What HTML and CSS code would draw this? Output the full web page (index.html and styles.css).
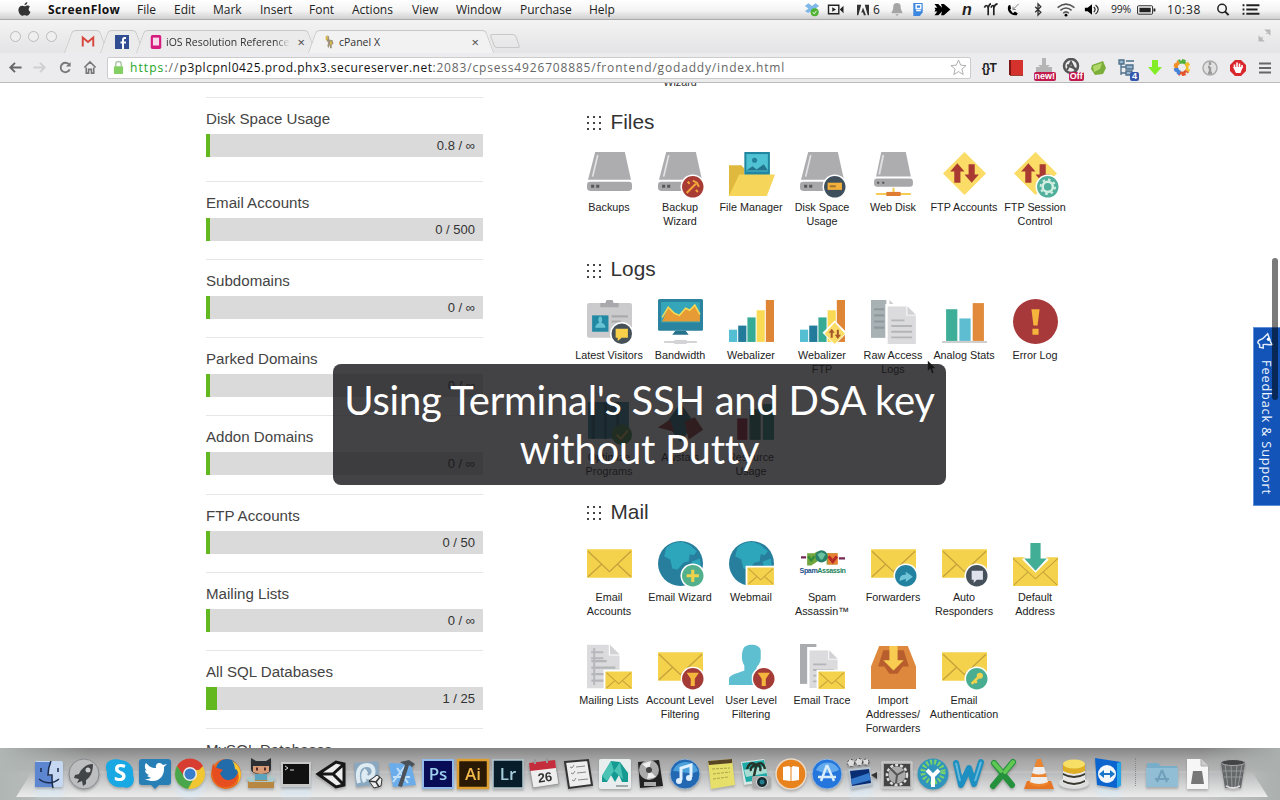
FILE: index.html
```html
<!DOCTYPE html>
<html lang="en">
<head>
<meta charset="utf-8">
<title>cPanel X</title>
<link rel="stylesheet" href="styles.css">
</head>
<body>
<svg class="defs" aria-hidden="true">
  <symbol id="drive" viewBox="0 0 44 44"><path d="M8 1h29l6 27H1L8 1z" fill="#adadb0"/><path d="M10.500 4 5.500 25" stroke="#e4e4e6" stroke-width="1.600"/><rect y="30" width="44" height="9" rx="3" fill="#a8a8ab"/><path d="M4 34.500h3m2 0h3" stroke="#58585b" stroke-width="3"/></symbol>
  <symbol id="mail" viewBox="0 0 44 44"><path d="M0 8h44v28H0z" fill="#f4d24b"/><path d="m1 10 21 20 21-20M1 35l13-12m29 12L30 23" fill="none" stroke="#c4a23b" stroke-width="1.300"/></symbol>
  <symbol id="minimail" viewBox="0 0 28 20"><path d="M0 0h28v20H0z" fill="#fff"/><path d="M2 2h26v17H2z" fill="#f4d24b"/><path d="m3 3 12 11L27 3M3 18l8-7m16 7-8-7" fill="none" stroke="#c4a23b"/></symbol>
  <symbol id="globe" viewBox="0 0 44 44"><circle cx="22" cy="22" r="22" fill="#277f9d"/><path d="M8 7c5-5 9-6 16-6l7 3 7 6-3 4-4-1-1 7-5 1-6 7-5-1-2-9-6-3z" fill="#2da5ba"/><path d="m33 20 8-3 1 9-7 5z" fill="#2da5ba"/></symbol>
  <symbol id="page" viewBox="0 0 30 40"><path d="M0 0h20v10h10v30H0z" fill="#dbdbdd"/><path d="m21 0 9 9h-9z" fill="#d2d2d4"/><path d="M4 15h14M4 21h22M4 27h22M4 33h22" stroke="#b4b5b8" stroke-width="2"/></symbol>
  <symbol id="bars" viewBox="0 0 44 44"><path d="M0 30h8v12H0z" fill="#54bed2"/><path d="M9 26h8v16H9z" fill="#237b9b"/><path d="M18 18h8v24h-8z" fill="#35aa95"/><path d="M27 11h8v31h-8z" fill="#fada55"/><path d="M36 1h8v41h-8z" fill="#df8536"/></symbol>
  <symbol id="updown" viewBox="0 0 44 44"><path d="m22 1 21 21-21 21L1 22z" fill="#fbdc66"/><path d="m15 12 7 8h-4v11h-6V20H8zM26 13h6v10h4l-7 8-7-8h4z" fill="#aa3a31"/></symbol>
  <symbol id="filter" viewBox="0 0 24 24"><circle cx="12" cy="12" r="12" fill="#fff"/><circle cx="12" cy="12" r="10.500" fill="#a43b36"/><path d="M6 6h12l-4 6v7h-4v-7z" fill="#f4b53c"/></symbol>
</svg>

<header class="menubar">
  <nav class="menus">
    <svg class="apple" viewBox="0 0 16 16"><path fill="#333" d="M11 0c0 2-1 3-3 3.500C8 1.700 9 .5 11 0zM8 4.500c1 0 2-1 3.500-.8 1 .1 1.700.5 2.300 1.300-2 1.300-1.700 4.500.6 5.500-.7 2-2 4.200-3.600 4.200-1 0-1.300-.6-2.600-.6s-1.700.6-2.700.6C3.500 14.700 1 10.500 1.600 7.500 2 5 4 3.800 5.500 3.900 6.600 4 7.300 4.500 8 4.500z"/></svg>
    <b>ScreenFlow</b><span>File</span><span>Edit</span><span>Mark</span><span>Insert</span><span>Font</span><span>Actions</span><span>View</span><span>Window</span><span>Purchase</span><span>Help</span>
  </nav>
  <div class="status">
    <svg viewBox="0 0 18 16"><path d="m5 1 4 3 4-3 4 3-4 3 4 3-4 2-4-3-4 3-4-2 4-3-4-3z" fill="#7db8e8"/><circle cx="12" cy="11" r="4.500" fill="#51b332"/><path d="m10 11 1.500 2L14 9.500" stroke="#fff" fill="none"/></svg>
    <svg class="wide" viewBox="0 0 18 16"><path d="M1 3.500h11v9H1z" fill="none" stroke="#222" stroke-width="1.500"/><path d="m5 5.500 4 2.500-4 2.500zM13 8l4-4v8z" fill="#222"/></svg>
    <span class="adobe"><svg viewBox="0 0 14 14"><path d="M0 1h5L1.500 13H0zM9 1h5v12h-1.500zM7 4l3.500 9H8L7 10H5z" fill="#333"/></svg>6</span>
    <svg viewBox="0 0 14 16"><path d="M7 1c4 0 4 3 4 6l2 5H1l2-5c0-3 0-6 4-6zM5 13h4l-2 2z" fill="#a5a5a5"/></svg>
    <svg viewBox="0 0 14 16"><path d="M2 1h10v10l-3 4H2z" fill="#3b86df"/><path d="M5 3h5v4H5zm0 6h5" stroke="#fff" fill="none" stroke-width="1.500"/></svg>
    <svg class="wide" viewBox="0 0 18 16"><path d="M1 2h4l4 4-1-4h3l7 6-7 6H8l1-4-4 4H1l3-4H1l1-2-1-2h3z"/></svg>
    <i class="n">n</i>
    <svg viewBox="0 0 16 16"><path d="M1 6c1-3 3-3 4 0v8M5 6c1-3 2-4 3-4M8 6c1-3 3-3 3 0v8M11 6c1-3 2-4 4-4" fill="none" stroke="#222" stroke-width="1.800"/></svg>
    <svg viewBox="0 0 16 16"><path d="M3 4c-2 5 2 11 9 10l1-2-3-2-2 2-3-4 1-1-1-4z"/><path d="m8 8 6-6M8 5v3h3" stroke="#777" fill="none"/></svg>
    <svg viewBox="0 0 12 16"><path d="m3 5 6 6-3 3V2l3 3-6 6" fill="none" stroke="#333" stroke-width="1.400"/></svg>
    <svg class="wide" viewBox="0 0 20 16"><path d="M1 6c6-5 12-5 18 0M4 9c4-3.500 8-3.500 12 0M7 12c2-2 4-2 6 0" fill="none" stroke="#555" stroke-width="1.700"/><circle cx="10" cy="14" r="1.500"/></svg>
    <svg viewBox="0 0 18 16"><path d="M1 6h3l5-4v12l-5-4H1z"/><path d="M11 5c2 2 2 4 0 6M13 3c4 3 4 7 0 10" fill="none" stroke="#222" stroke-width="1.300"/></svg>
    <small>99%</small>
    <svg class="wide" viewBox="0 0 20 16"><rect x="1" y="4" width="16" height="9" rx="1" fill="none" stroke="#222"/><path d="M3 6h12v5H3zM18 7h2v3h-2z" fill="#222"/></svg>
    <span class="clock">10:38</span>
    <svg viewBox="0 0 16 16"><circle cx="7" cy="7" r="4.500" fill="none" stroke="#222" stroke-width="1.600"/><path d="m10 10 4 4" stroke="#222" stroke-width="2.200"/></svg>
    <svg class="wide" viewBox="0 0 20 16"><path d="M1 3.500h2M5 3.500h14M1 8h2M5 8h12M1 12.500h2M5 12.500h14" stroke="#222" stroke-width="2.200"/></svg>
  </div>
</header>

<div class="tabstrip">
  <div class="lights"><i></i><i></i><i></i></div>
  <div class="tab t1"><svg viewBox="0 0 16 14"><path d="M2 12V2l6 5 6-5v10" fill="none" stroke="#d7453c" stroke-width="2.200"/></svg></div>
  <div class="tab t2"><svg viewBox="0 0 14 14"><path d="M0 0h14v14H0z" fill="#314e92"/><path d="M11 3H9.500Q8 3 8 5v9M5.500 7.500H11" fill="none" stroke="#fff" stroke-width="2"/></svg></div>
  <div class="tab t3"><svg viewBox="0 0 14 16"><rect x="1" width="12" height="16" rx="2" fill="#d61d7f"/><rect x="3.500" y="3" width="7" height="9" fill="#f7dcec"/></svg><span class="fade">iOS Resolution Reference -</span><b>×</b></div>
  <div class="tab active t4"><svg viewBox="0 0 14 16"><path d="m4 0 2 2v3l4 1 1 4-2 1v4H7v-4l-2 4-1-3 1-3-2-3 1-3z" fill="#9b9276"/><path d="M3 1v5m5 1v4" stroke="#dcb944" stroke-width="2"/></svg><span>cPanel X</span><b>×</b></div>
  <div class="newtab"></div>
  <svg class="full" viewBox="0 0 12 12"><path d="M7 1h4v4zM1 7v4h4zM10 2 7.500 4.500M2 10l2.500-2.500" stroke="#b8b8b8" fill="#b8b8b8"/></svg>
</div>

<div class="toolbar">
  <div class="nav">
    <svg viewBox="0 0 16 16"><path d="M8 3 3 8l5 5M3 8h12" fill="none" stroke="#666" stroke-width="2"/></svg>
    <svg viewBox="0 0 16 16"><path d="m8 3 5 5-5 5M13 8H1" fill="none" stroke="#cfcfcf" stroke-width="2"/></svg>
    <svg viewBox="0 0 16 16"><path d="M12 4.500A5 5 0 1 0 13 10" fill="none" stroke="#777" stroke-width="2"/><path d="M14 2v5H9z" fill="#777"/></svg>
    <svg viewBox="0 0 16 16"><path d="m2 8 6-6 6 6M4 8v6h2.500v-4h3v4H12V8" fill="none" stroke="#777" stroke-width="1.700"/></svg>
  </div>
  <div class="urlbar">
    <svg class="lock" viewBox="0 0 12 16"><path d="M3 7V4.500c0-4 6-4 6 0V7" fill="none" stroke="#b2c7a9" stroke-width="1.600"/><rect x="1" y="6.500" width="10" height="8.500" rx="1" fill="#83cf63"/></svg>
    <div class="url"><em>https</em><i>://</i><strong>p3plcpnl0425.prod.phx3.secureserver.net</strong>:2083/cpsess4926708885/frontend/godaddy/index.html</div>
    <svg class="star" viewBox="0 0 18 18"><path d="m9 1 2.300 5.500 5.700.5-4.400 3.700L14 16.500l-5-3.200-5 3.200 1.400-5.800L1 7l5.700-.5z" fill="#fff" stroke="#aaa"/></svg>
  </div>
  <div class="exts">
    <b class="jt">{}T</b>
    <svg viewBox="0 0 20 20"><path d="M3 2h14v15H3z" fill="#d5322e"/><path d="M3 2h2v15H3z" fill="#7f1717"/><path d="M4 17.500h13" stroke="#943"/></svg>
    <div class="badged"><svg viewBox="0 0 20 20"><path d="M8 0h4v7h4l-6 5-6-5h4zM2 9h16v5H2z" fill="#b5b5b5"/></svg><b class="new">new!</b></div>
    <div class="badged"><svg viewBox="0 0 20 20"><circle cx="9" cy="8" r="7" fill="none" stroke="#555" stroke-width="2.500"/><path d="m5 12 4-8 4 8M5 7l9 4" stroke="#555" fill="none" stroke-width="2"/></svg><b class="off">Off</b></div>
    <svg viewBox="0 0 20 20"><path d="m3 7 11-4 3 7-3 6-8 1-4-6z" fill="#7cae3b"/><path d="m4 8 9-3-2 6-6 3z" fill="#b2d86a"/></svg>
    <div class="badged"><svg viewBox="0 0 20 20"><path d="M2 2h5v4H2zM4 6v11M4 9h5M4 15h5M9 3h8M9 7h7v4H9zM9 13h6v4H9z" fill="#9ab6ce" stroke="#4b6d89" stroke-width="1.300"/></svg><b class="four">4</b></div>
    <svg viewBox="0 0 20 20"><path d="M7 2h6v7h4l-7 8-7-8h4z" fill="#83ed27"/></svg>
    <svg viewBox="0 0 20 20"><g fill="none" stroke-width="4.500"><path d="M4 11a6 6 0 0 1 3-7" stroke="#f28f24"/><path d="M7 4a6 6 0 0 1 7 1" stroke="#54af3e"/><path d="M14 5a6 6 0 0 1 1 8" stroke="#f1bc23"/><path d="M15 13a6 6 0 0 1-8 2" stroke="#e4552e"/><path d="M8 15a6 6 0 0 1-4-5" stroke="#4383dc"/></g><circle cx="9.500" cy="9.500" r="8" fill="none" stroke="#ececee" stroke-width="2" stroke-dasharray="2 4"/></svg>
    <svg viewBox="0 0 20 20"><circle cx="10" cy="10" r="7" fill="#e1e1e1" stroke="#aaa" stroke-width="1.500"/><path d="M10 4v3m0 2v6m-2 0h4M8 9h2" stroke="#9a9a9a" stroke-width="2.400"/></svg>
    <svg viewBox="0 0 20 20"><path d="M7 2h6l5 5v6l-5 5H7l-5-5V7z" fill="#d9272d"/><path d="M6.500 10V6.500M9 10V4.500M11.500 10V5.500M14 10V7" stroke="#fff" stroke-width="1.600"/><path d="m5 9 3 6h4.500l2.300-6z" fill="#fff"/></svg>
    <svg viewBox="0 0 20 20"><path d="M4 5.500h12M4 10h12M4 14.500h12" stroke="#666" stroke-width="2"/></svg>
  </div>
</div>

<main class="page">
  <aside class="stats">
    <div class="stat first"><h3>Disk Space Usage</h3><div class="meter">0.8 / ∞</div></div>
    <div class="stat"><h3>Email Accounts</h3><div class="meter">0 / 500</div></div>
    <div class="stat"><h3>Subdomains</h3><div class="meter">0 / ∞</div></div>
    <div class="stat"><h3>Parked Domains</h3><div class="meter">0 / ∞</div></div>
    <div class="stat"><h3>Addon Domains</h3><div class="meter">0 / ∞</div></div>
    <div class="stat"><h3>FTP Accounts</h3><div class="meter">0 / 50</div></div>
    <div class="stat"><h3>Mailing Lists</h3><div class="meter">0 / ∞</div></div>
    <div class="stat"><h3>All SQL Databases</h3><div class="meter used">1 / 25</div></div>
    <div class="stat"><h3>MySQL Databases</h3></div>
  </aside>
  <div class="groups">
    <div class="prev"><span>Wizard</span></div>
    <section class="files">
      <h2><i class="grip"></i>Files</h2>
      <div class="grid">
        <a><svg><use href="#drive"/></svg>Backups</a>
        <a><svg viewBox="0 0 44 44"><use href="#drive"/><circle cx="34" cy="35" r="12" fill="#fff"/><circle cx="34" cy="35" r="10.500" fill="#a83b34"/><path d="m28 41 9-9M34 29l4 2 2 4M31 32l-2-2M37 38l2 2" fill="none" stroke="#f2a53a" stroke-width="2"/></svg>Backup<br>Wizard</a>
        <a><svg viewBox="0 0 44 44"><path d="M0 14h12l3 3v27H0z" fill="#dfb93d"/><path d="M15 1h25v25H15z" fill="#2187a1"/><path d="M17 3h21v17H17z" fill="#4fc3d3"/><path d="m17 19 6-4 4 3 7-5 4 6z" fill="#24748e"/><circle cx="25" cy="9" r="2.500" fill="#23819b"/><path d="M10 23h35l-8 21H0z" fill="#f6d65a"/></svg>File Manager</a>
        <a><svg viewBox="0 0 44 44"><use href="#drive"/><circle cx="34" cy="35" r="12" fill="#fff"/><circle cx="34" cy="35" r="10.500" fill="#3f505c"/><path d="M27 31h14v7H27z" fill="#f3b13b"/><path d="M29 34.500h6" stroke="#a37330" stroke-width="2"/></svg>Disk Space<br>Usage</a>
        <a><svg viewBox="0 0 44 44"><path d="M10 1h24l5 24H5z" fill="#adadb0"/><path d="m12 4-4 19" stroke="#dedee0" stroke-width="2"/><rect x="3" y="27" width="38" height="8" rx="3" fill="#a8a8ab"/><path d="M6 31h2m3 0h2" stroke="#555" stroke-width="2"/><path d="M5 42h34M22 36v6" stroke="#f4cc54" stroke-width="2"/><path d="M15 40h14v4H15z" fill="#df7e32"/></svg>Web Disk</a>
        <a><svg><use href="#updown"/></svg>FTP Accounts</a>
        <a><svg viewBox="0 0 44 44"><use href="#updown"/><circle cx="34" cy="35" r="12" fill="#fff"/><circle cx="34" cy="35" r="10.500" fill="#50b09b"/><circle cx="34" cy="35" r="5" fill="none" stroke="#d3eee2" stroke-width="2.500"/><circle cx="34" cy="35" r="7" fill="none" stroke="#d3eee2" stroke-width="2" stroke-dasharray="2.500 3"/></svg>FTP Session<br>Control</a>
      </div>
    </section>
    <section class="logs">
      <h2><i class="grip"></i>Logs</h2>
      <div class="grid">
        <a><svg viewBox="0 0 44 44"><rect y="4" width="44" height="34" rx="2" fill="#cbcbcd"/><path d="M13 4h5l1-3h6l1 3h5v4H13z" fill="#a9a9ad"/><path d="M5 16h16v16H5z" fill="#2388a3"/><path d="M8 28c1-4 3-4 4-5-2-4 0-6 1-6s3 2 1 6c1 1 4 1 4 5z" fill="#67c3d3"/><path d="M24 17h16M24 22h9" stroke="#aaa" stroke-width="2"/><circle cx="34" cy="34" r="11.500" fill="#fff"/><circle cx="34" cy="34" r="10" fill="#455059"/><path d="M28 29h12v9h-6l-4 3v-3h-2z" fill="#f8cf48"/></svg>Latest Visitors</a>
        <a><svg viewBox="0 0 44 44"><rect width="44" height="31" rx="1.500" fill="#2b849f"/><path d="M3 3h38v20H3z" fill="#35a5b9"/><path d="m4 22 6-14 6 6 5 2 6-7 4 2 5-5 5 9v7z" fill="#e79b35"/><path d="m4 18 6-10 6 6 5 2 6-7 4 2 5-5 5 9" fill="none" stroke="#f8d954" stroke-width="1.500"/><path d="M17 31h10l3 4H14z" fill="#24718c"/><path d="M6 42h32" stroke="#aaa"/><path d="M16 40h12v4H16z" fill="#d4d4d6"/></svg>Bandwidth</a>
        <a><svg><use href="#bars"/></svg>Webalizer</a>
        <a><svg viewBox="0 0 44 44"><use href="#bars"/><path d="m34 21 12 12-12 12-12-12z" fill="#fff"/><path d="m34 23 10 11-10 10-10-10z" fill="#fbdc66"/><path d="m31 29 3 4h-2v5h-2v-5h-2zM37 39l-3-4h2v-5h2v5h2z" fill="#a65729"/></svg>Webalizer<br>FTP</a>
        <a><svg viewBox="0 0 44 44"><path d="M0 1h15v37H0z" fill="#a8b1b4"/><path d="M3 10h10M3 16h10M3 22h10M3 28h10" stroke="#8f999d" stroke-width="2"/><path d="m18 1 4 4h-4z" fill="#ccc"/><path d="M14 5h32v40H14z" fill="#fff"/><use href="#page" x="16" y="7" width="28" height="37"/></svg>Raw Access<br>Logs</a>
        <a><svg viewBox="0 0 44 44"><path d="M4 10h11v31H4z" fill="#3fae99"/><path d="M17 19h11v22H17z" fill="#5ebdd0"/><path d="M30 4h11v37H30z" fill="#e28a3b"/><path d="M0 42h44" stroke="#cfcfcf" stroke-width="2"/></svg>Analog Stats</a>
        <a><svg viewBox="0 0 44 44"><circle cx="22" cy="22" r="22" fill="#a7393a"/><path d="M18 10h8l-2 16h-4zM19 29h6v6h-6z" fill="#f5b43c"/></svg>Error Log</a>
        <a><svg viewBox="0 0 44 44"><path d="M1 1h40v36H1z" fill="#2d8ca0"/><path d="M6 1v36M18 1v36M30 1v36" stroke="#1a657b" stroke-width="3"/><circle cx="34" cy="33" r="10" fill="#3b8d49"/><path d="m29 33 4 4 7-8" fill="none" stroke="#e9b64d" stroke-width="2"/></svg>Optimize<br>Programs</a>
        <a><svg viewBox="0 0 44 44"><path d="m22 2 14 20-14 18L8 22z" fill="#256f87"/><path d="m0 26 12-8 4 12zM26 20l10-4 8 12-14 10z" fill="#8f3636"/></svg>Awstats</a>
        <a><svg viewBox="0 0 44 44"><path d="M8 17h10v21H8z" fill="#a31e36"/><path d="M20 8h11v30H20z" fill="#267b65"/><path d="M33 3h11v35H33z" fill="#288c86"/></svg>Resource<br>Usage</a>
      </div>
    </section>
    <section class="mail">
      <h2><i class="grip"></i>Mail</h2>
      <div class="grid">
        <a><svg><use href="#mail"/></svg>Email<br>Accounts</a>
        <a><svg viewBox="0 0 44 44"><use href="#globe"/><circle cx="34" cy="34" r="12" fill="#fff"/><circle cx="34" cy="34" r="10.500" fill="#52b18c"/><path d="M28 34h12M34 28v12" stroke="#f0d34c" stroke-width="3"/></svg>Email Wizard</a>
        <a><svg viewBox="0 0 44 44"><use href="#globe"/><use href="#minimail" x="16" y="24" width="28" height="20"/></svg>Webmail</a>
        <a><svg viewBox="0 0 44 44"><path d="M7 12h7l3-2v10l-6 4H7zM26 12h10v11H26z" fill="#71a63e"/><path d="M27 12h10v11H27z" fill="#e67f31"/><path d="M1 16h5M38 17h6" stroke="#752653" stroke-width="2"/><circle cx="21" cy="15" r="6" fill="#28826b"/><path d="m17 13 4-2 4 2-3 5h-2z" fill="#6cc1a1"/><path d="m28 15 4 5 4-5" fill="none" stroke="#b62b25" stroke-width="3"/><path d="m8 15 3 4 3-4" fill="none" stroke="#2d8b3a" stroke-width="2"/><text x="22" y="31" class="spam"><tspan fill="#23518a">Spam</tspan><tspan fill="#24835a">Assassin</tspan></text></svg>Spam<br>Assassin™</a>
        <a><svg viewBox="0 0 44 44"><use href="#mail"/><circle cx="34" cy="34" r="12" fill="#fff"/><circle cx="34" cy="34" r="10.500" fill="#2482a1"/><path d="M28 39c0-5 2-6 6-6v-3l7 5-7 5v-3z" fill="#70c5da"/></svg>Forwarders</a>
        <a><svg viewBox="0 0 44 44"><use href="#mail"/><circle cx="34" cy="34" r="12" fill="#fff"/><circle cx="34" cy="34" r="10.500" fill="#46515c"/><path d="M29 29h11v9h-6l-3 3v-3h-2z" fill="#dfe2ed"/></svg>Auto<br>Responders</a>
        <a><svg viewBox="0 0 44 44"><path d="M0 16h44v28H0z" fill="#f4d24b"/><path d="m0 17 22 20 22-20M1 43l14-13m28 13L29 30" fill="none" stroke="#c4a23b"/><path d="M15 13h14l6 5-13 13L9 18z" fill="#fff"/><path d="M17 2h10v15h6L22 29 11 17h6z" fill="#42ae96"/></svg>Default<br>Address</a>
        <a><svg viewBox="0 0 44 44"><use href="#page" width="32" height="44"/><path d="M7 4v36M4 8h12M4 14h12" stroke="#b7b7bd" stroke-width="2"/><use href="#minimail" x="16" y="25" width="28" height="20"/></svg>Mailing Lists</a>
        <a><svg viewBox="0 0 44 44"><use href="#mail"/><use href="#filter" x="22" y="22" width="24" height="24"/></svg>Account Level<br>Filtering</a>
        <a><svg viewBox="0 0 44 44"><path d="M14 5c1-6 16-6 17 1v8c0 5-3 7-4 9v5l9 6v6H0v-6c0-4 11-6 15-8v-5c-3-4-3-12-1-16z" fill="#5dbfd0"/><use href="#filter" x="22" y="22" width="24" height="24"/></svg>User Level<br>Filtering</a>
        <a><svg viewBox="0 0 44 44"><path d="M0 0h16v39H0z" fill="#aaabae"/><path d="M7 3h30v39H7z" fill="#fff"/><use href="#page" x="9" y="6" width="28" height="37"/><use href="#minimail" x="16" y="25" width="28" height="20"/></svg>Email Trace</a>
        <a><svg viewBox="0 0 44 44"><path d="M8 2h28l8 20v22H0V22z" fill="#dd883c"/><path d="M12 6h20l5 16h-6l-5 7h-8l-5-7H7z" fill="#b85d2d"/><path d="M18 2h8v14h6L22 26 12 16h6z" fill="#f7cc50"/></svg>Import<br>Addresses/<br>Forwarders</a>
        <a><svg viewBox="0 0 44 44"><use href="#mail"/><circle cx="34" cy="34" r="12" fill="#fff"/><circle cx="34" cy="34" r="10.500" fill="#49ae91"/><circle cx="37" cy="31" r="3" fill="#f3d34c"/><path d="m35 33-6 6m3-3 2 2" stroke="#f3d34c" stroke-width="2.500"/></svg>Email<br>Authentication</a>
      </div>
    </section>
  </div>
  <div class="feedback"><svg viewBox="0 0 20 20"><path d="M2 12c0-4 4-3 6-5l5-5c2 4 2 9 5 12-4 1-7-1-10 0v4l-4-1v-3z" fill="none" stroke="#e6eefb" stroke-width="1.600"/><circle cx="14" cy="8" r="2" fill="#fff"/></svg><span>Feedback &amp; Support</span></div>
  <div class="thumb"></div>
  <div class="caption">Using Terminal's SSH and DSA key<br><span>without Putty</span></div>
  <svg class="cursor" viewBox="0 0 12 16"><path d="M1 0v12l3-3 2 6 2-1-2-5h4z" fill="#161616"/></svg>
</main>

<footer class="desktop">
  <div class="shelf"></div>
  <div class="dock">
    <svg class="run" viewBox="0 0 32 32"><rect x="2" y="3" width="28" height="26" rx="2" fill="#c6d8f1"/><path d="M2 4h16c-3 7-3 10-3 14h4v11H2z" fill="#5d86d1"/><path d="M18 3c-3 7-3 10-3 14h4c0 6 0 9 1 13M8 10v4m17-4v4M6 21c6 5 14 5 20 0" fill="none" stroke="#1b2b4c" stroke-width="1.500"/></svg>
    <svg viewBox="0 0 32 32"><circle cx="16" cy="16" r="15" fill="#bcbec0" stroke="#878a8d"/><path d="M25 6c-7 0-12 5-14 10l-4 1-1 3 5 1-2 4 5-2 1 5 3-2v-4c5-3 7-9 7-16z" fill="#424548"/><circle cx="20" cy="12" r="2.500" fill="#ccc"/></svg>
    <svg viewBox="0 0 32 32"><path d="M5 3c7-3 9-1 12-1 9 1 13 8 12 15 3 7-2 15-10 12C9 31 2 23 3 14 1 9 2 5 5 3z" fill="#18a8e4"/><text x="16" y="23" class="logo" fill="#fff">S</text></svg>
    <svg viewBox="0 0 32 32"><path d="M3 1h26q3 0 3 3v20q0 3-3 3h-9l-4 4-4-4H3q-3 0-3-3V4q0-3 3-3z" fill="#287fb6"/><path d="M6 21c12 6 20-2 19-12l3-3-4 1c-4-4-8-1-7 3-5 0-7-2-10-5-2 3-1 6 1 8l-2-1c0 3 2 4 4 5l-2 1 4 2c-2 1-4 1-6 1z" fill="#fff"/></svg>
    <svg class="run" viewBox="0 0 32 32"><circle cx="16" cy="16" r="15" fill="#f0c633"/><path d="M3 8a15 15 0 0 1 26 0l-4 4H16L9 21z" fill="#d73e31"/><path d="M3 8c-5 10 0 21 11 23l6-11-8 1z" fill="#49a64a"/><circle cx="16" cy="16" r="7" fill="#eee"/><circle cx="16" cy="16" r="5.500" fill="#387ecb"/></svg>
    <svg viewBox="0 0 32 32"><circle cx="16" cy="16" r="15" fill="#e96a1e"/><circle cx="17" cy="12" r="11" fill="#236cac"/><path d="M3 5c2 7 5 4 10 7l-3 3c3 9 11 9 18 2-2 9-7 12-13 12C5 29 0 18 3 5z" fill="#e64d1f"/><path d="M22 3c9 4 12 16 5 23 3-6 2-12-1-15-2 2 0-4-4-8z" fill="#f9c72d"/></svg>
    <svg viewBox="0 0 32 32"><path d="M6 0l5 3h10l5-3v11c0 7-20 7-20 0z" fill="#2d3032"/><path d="M8 8h16v6q-8 4-16 0z" fill="#d89b77"/><path d="M11 11h2m6 0h2" stroke="#542b25" stroke-width="3"/><path d="M10 16h12v8H10z" fill="#5ca3bd"/><path d="M3 22h26v8H3z" fill="#b88843"/><path d="m1 20 6-2 3 5h12l3-5 6 2-3 4H4z" fill="#a9c9cc"/></svg>
    <svg class="run" viewBox="0 0 32 32"><path d="M1 4h30v25H1z" fill="#c7c7c7"/><path d="M3 6h26v20H3z" fill="#111"/><path d="m5 8 3 2-3 2m5 0h4" fill="none" stroke="#ddd"/></svg>
    <svg viewBox="0 0 32 32"><path d="M1 16 20 3l9 2v22l-9 3z" fill="#eee"/><path d="m2 16 18-12 8 2v21l-8 2zM2 16h15M17 16l11-10M17 16l11 11" fill="none" stroke="#171717" stroke-width="3"/></svg>
    <svg viewBox="0 0 32 32"><path d="M3 5 27 3l2 23-24 3z" fill="#8aa8bf"/><path d="M8 25c-3-11 0-18 8-18 7 0 9 9 3 12-5 2-6-4-3-6M14 24c-3-5-2-9 1-12" fill="none" stroke="#deebf3" stroke-width="4"/><path d="m18 23 8-6 5 4-1 7-7 2z" fill="#eee" stroke="#333"/><path d="m18 23 7 1 4-5m-4 5 3 5" fill="none" stroke="#333" stroke-width="1.500"/></svg>
    <svg viewBox="0 0 32 32"><path d="m3 5 22 1 5 21-23 2z" fill="#6badea"/><path d="m7 24 12-16M11 10l11 15M7 19h17" stroke="#c3e0fa" stroke-width="2"/><path d="m14 4 9-2 6 4-3 3-3-2-7 22-4-1 7-21z" fill="#4a5158"/></svg>
    <svg viewBox="0 0 32 32"><path d="M1 2h30v28H1z" fill="#080c57" stroke="#91b9ea" stroke-width="2"/><text x="16" y="22" class="app" fill="#9dceed">Ps</text></svg>
    <svg viewBox="0 0 32 32"><path d="M1 2h30v28H1z" fill="#2a1905" stroke="#dc9d31" stroke-width="2.500"/><text x="16" y="22" class="app" fill="#f1b64b">Ai</text></svg>
    <svg viewBox="0 0 32 32"><path d="M1 2h30v28H1z" fill="#071e2a" stroke="#b5c8d0" stroke-width="1.500"/><text x="16" y="22" class="app" fill="#a5cddb">Lr</text></svg>
    <svg viewBox="0 0 32 32"><path d="m1 6 26-4 4 24-26 4z" fill="#eee" stroke="#999"/><path d="m1 5 26-3 1 8-26 3z" fill="#c52c3c"/><path d="M7 1v5M19 0v5" stroke="#999" stroke-width="2"/><text x="17" y="24" class="date" transform="rotate(-8 16 20)">26</text></svg>
    <svg viewBox="0 0 32 32"><path d="m2 4 23-2 4 25-23 3z" fill="#eee" stroke="#333" stroke-width="2"/><path d="m7 9 2 1 2-3m-3 8 2 1 2-3m-3 9 2 1 2-3M13 9l9-1m-8 7 9-1m-8 8 10-1" fill="none" stroke="#888"/></svg>
    <svg viewBox="0 0 32 32"><rect y="1" width="32" height="30" rx="2" fill="#e8eded"/><path d="m3 18 9-15 9 1 8 11v9h-6l-3-7-4 7-4-7-4 7H3z" fill="#159a92"/><path d="m3 18 9-15 3 10-7 10zM15 13l6-9 3 17z" fill="#4ac2b4"/><path d="M17 28h12" stroke="#566"/></svg>
    <svg viewBox="0 0 32 32"><path d="m4 4 21-2 4 26-23 2z" fill="#222"/><circle cx="15" cy="12" r="10" fill="#aaa"/><path d="m15 12-7-6 9-3zM15 12l7 7-9 2z" fill="#eee"/><circle cx="15" cy="12" r="3" fill="#444"/><path d="M10 24h12v4H10z" fill="#aaa"/></svg>
    <svg viewBox="0 0 32 32"><circle cx="16" cy="16" r="15" fill="#2368b2" stroke="#9ab3ca"/><path d="M4 13C8 1 26 1 29 13c-8 5-17 0-25 0z" fill="#4ba0db"/><path d="M12 22V10l10-3v12" fill="none" stroke="#e0f0ff" stroke-width="3"/><circle cx="10" cy="23" r="3" fill="#e0f0ff"/><circle cx="20" cy="20" r="3" fill="#e0f0ff"/></svg>
    <svg viewBox="0 0 32 32"><path d="m3 3 24-2 3 26-24 4z" fill="#e6df6a"/><path d="m3 3 24-2v4L4 7z" fill="#594526"/><path d="m7 11 18-1m-17 6 17-2m-17 7 15-2" stroke="#aaa64a" stroke-dasharray="3 1"/></svg>
    <svg viewBox="0 0 32 32"><path d="m1 4 23-3 5 22-25 4z" fill="#d8e8e6"/><path d="m2 5 22-3 4 19-22 3z" fill="#1faaa7"/><path d="m4 12 22-4 1 7-21 4z" fill="#a9dcd2"/><path d="M14 23c-1-7 2-11 2-15M16 7c-5-4-8 0-9 4m9-4c-4 0-6 4-5 6m5-6c6-4 8 0 9 4m-9-4c5 0 5 4 4 6" fill="none" stroke="#253329" stroke-width="2.500"/><rect x="12" y="18" width="19" height="12" rx="2" fill="#aaa"/><circle cx="22" cy="24" r="5.500" fill="#15292d" stroke="#ddd"/><circle cx="22" cy="24" r="2.500" fill="#247d8d"/></svg>
    <svg viewBox="0 0 32 32"><circle cx="16" cy="16" r="15" fill="#e8821d" stroke="#eadac8" stroke-width="1.500"/><path d="m8 9 6-1 2 2 2-2 6 1v13l-7 1h-2l-7-1z" fill="#fff"/><path d="M16 10v13" stroke="#e8821d"/></svg>
    <svg viewBox="0 0 32 32"><circle cx="16" cy="16" r="15" fill="#2475dc" stroke="#9cb9d7"/><path d="M5 12C9 2 24 2 28 12c-8 4-16 4-23 0z" fill="#62a9ee"/><path d="m16 7-6 16m6-16 7 16M7 19h18" stroke="#d9edfb" stroke-width="2.500"/></svg>
    <svg class="run" viewBox="0 0 32 32"><path d="m2 11 22-2 3 18-22 4z" fill="#b8c4d0"/><path d="m4 13 19-2 2 14-19 3z" fill="#092d73"/><path d="m5 21 18-6 2 7-19 5z" fill="#3478cb"/><g fill="#ddd" stroke="#444" stroke-dasharray="2 2"><circle cx="5" cy="5" r="3.500"/><circle cx="13" cy="4" r="3.500"/><circle cx="20" cy="4" r="3"/></g><path d="m25 17 6-3v7z" fill="#333"/></svg>
    <svg viewBox="0 0 32 32"><path d="M1 4h30v26H1z" fill="#aaa" stroke="#ddd"/><path d="M3 6h26v22H3z" fill="#444"/><circle cx="16" cy="17" r="8.500" fill="#aaa"/><circle cx="16" cy="17" r="10" fill="none" stroke="#ddd" stroke-width="2.500" stroke-dasharray="3 2"/><path d="m16 17-6-6m6 6 7-4m-7 4-1 8" stroke="#555" stroke-width="2"/></svg>
    <svg viewBox="0 0 32 32"><circle cx="16" cy="16" r="15.500" fill="#3095bd"/><circle cx="16" cy="14" r="10" fill="none" stroke="#7bd369" stroke-width="5" stroke-dasharray="2 2"/><path d="M16 29V18l-6-6m6 6 6-6" fill="none" stroke="#fff" stroke-width="4"/></svg>
    <svg viewBox="0 0 32 32"><path d="M4 5 9 27 17 10l5 16 7-22" fill="none" stroke="#1d8fc0" stroke-width="6" stroke-linejoin="round" stroke-linecap="round"/><path d="m4 5 4 18m21-19-6 19" stroke="#67b9dc" stroke-width="2"/></svg>
    <svg viewBox="0 0 32 32"><path d="M7 5 25 27M26 4 6 28" stroke="#25913d" stroke-width="6" stroke-linecap="round"/><path d="m7 5 7 8m12-9-8 10" stroke="#61c854" stroke-width="4" stroke-linecap="round"/></svg>
    <svg viewBox="0 0 32 32"><path d="m4 23 24 0 3 8H1z" fill="#e87523"/><path d="m14 1h4l8 25q-10 5-20 0z" fill="#ed842f"/><path d="m11 9 10 0 2 6q-7 3-14 0zM8 19h16l1 5q-9 4-18 0z" fill="#eee"/></svg>
    <svg viewBox="0 0 32 32"><ellipse cx="16" cy="25" rx="15" ry="6" fill="#ddd"/><path d="M5 5v20q11 7 22 0V5z" fill="#e8e8e8"/><path d="M5 15q11 6 22 0v2q-11 6-22 0zM5 22q11 6 22 0v2q-11 6-22 0z" fill="#3a3930"/><path d="M5 13q11 6 22 0V5H5z" fill="#dfae26"/><ellipse cx="16" cy="6" rx="11" ry="4.500" fill="#f7de65"/></svg>
    <svg class="run" viewBox="0 0 32 32"><path d="m2 0 26 4v23l-5 3L4 27z" fill="#0c65ce"/><path d="m28 4-4 1v25l4-3z" fill="#28a6e7"/><circle cx="14" cy="16" r="9" fill="#f4f8fb"/><path d="m6 16 5-4v3h6v-3l5 4-5 4v-3h-6v3z" fill="#1975c8"/></svg>
    <i class="sep"></i>
    <svg viewBox="0 0 32 32"><path d="M1 5h11l3 3h16v20H1z" fill="#79aecb"/><path d="M0 10h32v19H0z" fill="#91bdd5"/><path d="m16 12-5 12m5-12 5 12M9 21h14" stroke="#6f9fbb" stroke-width="2"/></svg>
    <svg viewBox="0 0 32 32"><path d="M6 1h14l7 7v23H6z" fill="#f6f6f6"/><path d="M20 1v7h7" fill="#ccc" stroke="#aaa"/><path d="M12 13h9l2 13H10z" fill="#777"/></svg>
    <svg viewBox="0 0 32 32"><path d="m4 5 4 25h16l4-25z" fill="#65686a"/><path d="m8 6 3 23M14 7l1 22M20 7l-2 22M25 6l-4 23M6 13h21M7 19h18" stroke="#969898"/><ellipse cx="16" cy="4.500" rx="12" ry="3" fill="#424446" stroke="#aaa"/><path d="M9 28q7 4 14 0" fill="none" stroke="#ddd" stroke-width="2"/></svg>
  </div>
</footer>
</body>
</html>
```
FILE: styles.css
```css
* { box-sizing: border-box; }
body { margin: 0; width: 1280px; height: 800px; overflow: hidden; display: flex; flex-direction: column; font-family: "Liberation Sans", Arial, sans-serif; background: #fff; }
.defs { position: absolute; width: 0; height: 0; }

.menubar { height: 20px; flex: none; display: flex; justify-content: space-between; background: linear-gradient(#fff, #f4f4f4 55%, #d0d0d0); border-bottom: 1px solid #aaa; font: 500 12px/19px "Open Sans", sans-serif; color: #222; }
.menus { display: grid; grid-template-columns: 31px 89px 37px 39px 47px 49px 43px 60px 44px 64px 69px 60px; padding-left: 17px; white-space: nowrap; }
.apple { width: 15px; height: 17px; margin-top: 1px; }
.menus b { color: #111; letter-spacing: .4px; }
.status { display: grid; grid-template-columns: 19px 30px 34px 24px 18px 30px 20px 28px 16px 34px 22px 30px 28px 22px 54px 24px 32px; padding-right: 13px; align-items: center; justify-items: center; }
.status svg { height: 15px; width: 16px; }
.status .wide { width: 20px; }
.status .adobe { display: flex; gap: 3px; align-items: center; }
.status .adobe svg { width: 14px; height: 12px; }
.status small { font-size: 10.500px; letter-spacing: -.2px; }
.clock { letter-spacing: .7px; }
.n { font: italic 900 16px "Liberation Sans", sans-serif; }

.tabstrip { height: 33px; flex: none; display: flex; align-items: flex-end; background: linear-gradient(#f3f3f3, #e4e4e6); position: relative; }
.lights { width: 68px; align-self: center; display: flex; gap: 7px; padding-left: 10px; }
.lights i { width: 11px; height: 11px; border: 1px solid #bbb; border-radius: 50%; background: #efefef; }
.tab { height: 23px; flex: none; position: relative; display: flex; align-items: center; font: 500 10.500px "Open Sans", sans-serif; color: #333; z-index: 0; }
.tab::before, .tab::after { content: ""; position: absolute; z-index: -1; top: 0; bottom: 0; background: #ebebec; border-top: 1px solid #c8c8c8; }
.tab::before { left: 0; right: calc(50% - 6px); border-left: 1px solid #c8c8c8; transform: skewX(-20deg); border-top-left-radius: 4px; }
.tab::after { right: 0; left: calc(50% - 6px); border-right: 1px solid #c8c8c8; transform: skewX(20deg); border-top-right-radius: 4px; }
.active::before, .active::after { background: #f2f2f2; }
.tab svg { width: 14px; height: 14px; }
.tab b { margin-left: auto; font-size: 13px; font-weight: 400; color: #444; }
.t1 { width: 36px; justify-content: center; }
.t1 svg { margin-left: 3px; }
.t2 { width: 36px; justify-content: center; }
.t3 { width: 172px; padding: 0 7px 0 9px; gap: 3px; }
.t4 { width: 178px; padding: 0 11px 0 11px; gap: 2px; }
.fade { width: 124px; white-space: nowrap; overflow: hidden; -webkit-mask-image: linear-gradient(90deg, #000 88%, transparent); }
.newtab { width: 26px; height: 14px; margin: 0 0 5px 2px; border: 1px solid #c8c8c8; border-radius: 3px; transform: skewX(20deg); }
.full { width: 13px; height: 13px; margin: 0 9px 11px auto; }

.toolbar { height: 30px; flex: none; display: flex; align-items: center; background: #ececee; border-bottom: 1px solid #bbb; }
.nav { width: 107px; display: flex; gap: 9px; padding-left: 7px; }
.nav svg { width: 16px; height: 15px; }
.urlbar { width: 864px; height: 22px; display: flex; align-items: center; padding: 0 3px 0 5px; background: #fff; border: 1px solid #ccc; border-radius: 2px; }
.lock { width: 11px; height: 15px; }
.url { font: 500 12px "Open Sans", sans-serif; letter-spacing: .83px; margin-left: 6px; white-space: nowrap; color: #666; }
.url em, .url i { font-style: normal; letter-spacing: 1.080px; }
.url em { color: #23a51e; }
.url strong { font-weight: 500; color: #111; letter-spacing: .5px; }
.star { width: 17px; height: 17px; margin-left: auto; }
.exts { display: grid; grid-template-columns: repeat(11, 27.650px); margin-left: 4px; justify-items: center; align-items: center; }
.exts svg { width: 20px; height: 20px; display: block; }
.jt { font-size: 12px; letter-spacing: -.8px; color: #222; }
.badged { position: relative; width: 20px; }
.badged b { position: absolute; font: bold 9px/9px "Liberation Sans", sans-serif; color: #fff; background: #c21c4f; padding: 0 1px; border-radius: 2px; bottom: -3px; right: -2px; }
.badged .four { background: #3557ad; padding: 0 2px; }

.page { height: 665px; flex: none; position: relative; overflow: hidden; display: flex; padding-left: 206px; background: #fff; }
.stats { width: 277px; padding-top: 14px; }
.stat { height: 78.250px; border-top: 1px solid #e6e6e6; padding-top: 10px; }
.stat.first { height: 83.500px; }
.stat h3 { margin: 0; font-weight: 400; font-size: 15.100px; line-height: 22px; color: #444; }
.meter { height: 23px; margin-top: 4px; border-left: 4px solid #62b81f; background: #dadada; color: #333; font-size: 13px; line-height: 23px; text-align: right; padding-right: 8px; }
.meter.used { border-left-width: 11px; }
.groups { width: 497px; margin-left: 90.500px; }
.prev { height: 21px; overflow: hidden; font-size: 10.800px; line-height: 14px; padding-left: 71px; color: #333; }
.prev span { display: block; width: 71px; text-align: center; margin-top: -8px; }
.groups h2 { margin: 0; height: 47px; padding-left: 12px; display: flex; gap: 10px; align-items: flex-start; font-size: 20.800px; font-weight: 400; line-height: 35px; color: #333; }
.groups .logs h2 { line-height: 33px; }
.grip { width: 15px; height: 15px; margin-top: 11px; background: radial-gradient(circle at 2px 2px, #444 1px, transparent 1.500px) 0 0 / 6px 6px; }
.files { height: 147.500px; }
.logs { height: 242.500px; }
.grid { display: grid; grid-template-columns: repeat(7, 71px); grid-auto-rows: 102.500px; }
.grid a { text-align: center; font-size: 10.800px; line-height: 14px; color: #222; white-space: nowrap; display: block; }
.grid svg { width: 45px; height: 45px; display: block; margin: 0 auto 4px; overflow: visible; }
.spam { font-size: 7px; font-weight: bold; text-anchor: middle; letter-spacing: -.4px; }
.feedback { position: absolute; right: 0; top: 244px; width: 27px; height: 179px; background: #1254b7; border: 1px solid #5f91da; border-right: 0; display: flex; flex-direction: column; align-items: center; color: #f0f6ff; }
.feedback svg { width: 18px; height: 20px; margin: 3px 4px 9px 0; }
.feedback span { writing-mode: vertical-rl; font: 500 12.800px "Open Sans", sans-serif; letter-spacing: .8px; }
.thumb { position: absolute; right: 2px; top: 175px; width: 6px; height: 142px; border-radius: 3px; background: rgba(0, 0, 0, .52); }
.caption { position: absolute; left: 333px; top: 281px; width: 613px; height: 121px; border-radius: 8px; background: rgba(26, 25, 27, .82); color: #fff; font: 40px/49px Lato, sans-serif; letter-spacing: -.25px; font-variant-ligatures: none; text-align: center; padding-top: 12px; white-space: nowrap; }
.cursor { position: absolute; left: 927px; top: 277px; width: 10px; height: 15px; }

.desktop { height: 52px; flex: none; position: relative; background: linear-gradient(90deg, #afb6b3, transparent 7%, transparent 94%, #aab0ae), linear-gradient(#858585, #a6a6a6 12px, #b4b4b4 22px, #c6c6c6 25px); }
.shelf { position: absolute; left: 16px; right: 12px; top: 25px; bottom: 3px; background: linear-gradient(#b9babb, #ececec); clip-path: polygon(1.200% 0, 98.800% 0, 100% 100%, 0 100%); }
.dock { position: relative; display: flex; align-items: flex-start; padding: 10px 0 0 33px; gap: 3.350px; }
.dock svg { width: 32px; height: 32px; flex: none; overflow: visible; filter: drop-shadow(0 2px 1px rgba(0, 0, 0, .2)); }
.dock .run { filter: drop-shadow(0 2px 1px rgba(0, 0, 0, .2)) drop-shadow(0 10px 2px rgba(205, 235, 255, .35)); }
.sep { width: 14px; height: 28px; border-left: 1px dotted #888; margin-left: 6px; margin-right: -6px; }
.logo { font: bold 23px "Open Sans", sans-serif; text-anchor: middle; }
.app { font: 600 17px "Open Sans", sans-serif; text-anchor: middle; }
.date { font: bold 13px "Liberation Sans", sans-serif; text-anchor: middle; fill: #333; }
```
